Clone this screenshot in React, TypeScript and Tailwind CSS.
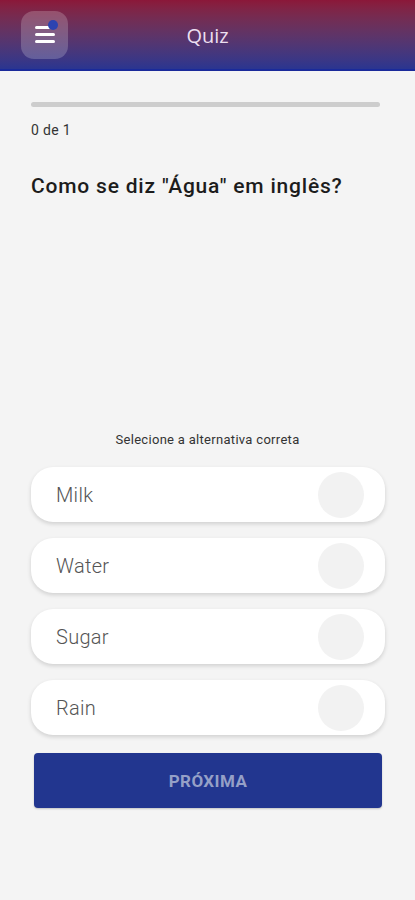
import React from "react";

const options = ["Milk", "Water", "Sugar", "Rain"];

export default function App() {
  return (
    <div className="min-h-[900px] w-full bg-[#f4f4f4] flex flex-col" style={{ fontFamily: "Roboto, 'Noto Sans', sans-serif" }}>
      <header className="h-[71px] bg-gradient-to-b from-[#8b1739] to-[#2a3590] border-b-[2px] border-[#1a2a9a] flex items-center relative">
        <div className="ml-[21px] w-[47px] h-[48px] rounded-[13px] bg-white/20 flex items-center justify-center relative">
          <div className="flex flex-col gap-[4px]">
            <div className="w-[20px] h-[3px] bg-white rounded-sm" />
            <div className="w-[20px] h-[3px] bg-white rounded-sm" />
            <div className="w-[20px] h-[3px] bg-white rounded-sm" />
          </div>
          <div className="absolute left-[27px] top-[9px] w-[10px] h-[10px] rounded-full bg-[#2d43b0]" />
        </div>
        <div className="absolute left-0 right-0 top-[21px] text-center text-[20px] text-[#ecdff0] pointer-events-none" style={{ fontFamily: "'Open Sans', sans-serif" }}>
          Quiz
        </div>
      </header>
      <div className="px-[31px] pt-[31px]">
        <div className="h-[5px] w-[349px] bg-[#cdcdcd] rounded-full" />
        <div className="mt-[14px] text-[14px] text-[#333] leading-[18px] tracking-[0.3px]">0 de 1</div>
        <div className="mt-[34px] text-[21px] text-[#1c1c1c] leading-[26px] font-medium tracking-[0.8px]">Como se diz "Água" em inglês?</div>
      </div>
      <div className="mt-[233px] text-center text-[13px] text-[#333] leading-[16px] tracking-[0.3px]">Selecione a alternativa correta</div>
      <div className="mt-[19px] px-[31px] pr-[30px] flex flex-col gap-[16px]">
        {options.map((o) => (
          <div key={o} className="h-[55px] bg-white rounded-[22px] shadow-[0_2px_4px_rgba(0,0,0,0.15)] flex items-center justify-between pl-[25px] pr-[21px]">
            <span className="text-[20px] font-light text-[#555] tracking-[0.3px]">{o}</span>
            <div className="w-[46px] h-[46px] rounded-full bg-[#f2f2f2]" />
          </div>
        ))}
      </div>
      <div className="mt-[18px] px-[34px] pr-[33px]">
        <div className="h-[55px] bg-[#22368f] rounded-[4px] flex items-center justify-center text-[17px] font-bold text-[#95a0c7] tracking-wide shadow-[0_1px_2px_rgba(0,0,0,0.2)] pt-[3px]">
          PRÓXIMA
        </div>
      </div>
    </div>
  );
}
